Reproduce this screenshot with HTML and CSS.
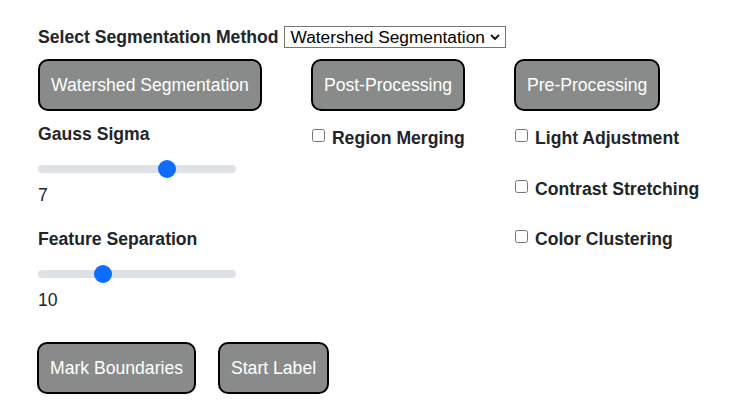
FILE: index.html
```html
<!DOCTYPE html>
<html>
<head>
<meta charset="utf-8">
<link rel="stylesheet" href="styles.css">
</head>
<body>
<div class="page">
  <div class="method-row">
    <label class="method-label" for="method">Select Segmentation Method</label>
    <span class="select-wrap">
      <select id="method" class="method-select">
        <option>Watershed Segmentation</option>
      </select>
      <svg class="chevron" width="10" height="7" viewBox="0 0 10 7"><path d="M1.5 1.5 L5 5 L8.5 1.5" fill="none" stroke="#111" stroke-width="1.8" stroke-linecap="round" stroke-linejoin="round"/></svg>
    </span>
  </div>

  <div class="columns">
    <div class="col col-main">
      <button class="btn">Watershed Segmentation</button>
      <div class="field-label first">Gauss Sigma</div>
      <input class="slider" type="range" min="1" max="10" value="7">
      <div class="value">7</div>
      <div class="field-label">Feature Separation</div>
      <input class="slider" type="range" min="0" max="32" value="10">
      <div class="value">10</div>
    </div>
    <div class="col">
      <button class="btn">Post-Processing</button>
      <div class="checks">
        <label class="check"><input type="checkbox"><span>Region Merging</span></label>
      </div>
    </div>
    <div class="col">
      <button class="btn">Pre-Processing</button>
      <div class="checks">
        <label class="check"><input type="checkbox"><span>Light Adjustment</span></label>
        <label class="check"><input type="checkbox"><span>Contrast Stretching</span></label>
        <label class="check"><input type="checkbox"><span>Color Clustering</span></label>
      </div>
    </div>
  </div>

  <div class="actions">
    <button class="btn">Mark Boundaries</button>
    <button class="btn">Start Label</button>
  </div>
</div>
<div class="bottom-fade"></div>
</body>
</html>
```

FILE: styles.css
```css
html, body {
  margin: 0;
  padding: 0;
  background: #ffffff;
}

body {
  font-family: "Liberation Sans", Arial, sans-serif;
  font-size: 17.6px;
  line-height: 20px;
  color: #212529;
  overflow: hidden;
  height: 401px;
}

.page {
  padding: 26px 0 0 38px;
}

.method-row {
  display: flex;
  align-items: center;
  height: 22px;
}

.method-label {
  font-weight: bold;
  margin-right: 6px;
}

.select-wrap {
  position: relative;
  display: inline-block;
  height: 22px;
}

.method-select {
  -webkit-appearance: none;
  appearance: none;
  box-sizing: border-box;
  width: 222px;
  height: 22px;
  margin: 0;
  padding: 0 18px 0 5px;
  border: 1px solid #767676;
  border-radius: 0;
  background: #ffffff;
  color: #000000;
  font-family: "Liberation Sans", Arial, sans-serif;
  font-size: 17.3px;
  line-height: 20px;
}

.chevron {
  position: absolute;
  right: 6px;
  top: 8px;
  pointer-events: none;
}

.columns {
  display: flex;
  align-items: flex-start;
  gap: 49px;
  margin-top: 11px;
}

.col {
  display: flex;
  flex-direction: column;
  align-items: flex-start;
}

.btn {
  box-sizing: border-box;
  height: 52px;
  margin: 0;
  padding: 0 11px;
  background: #888b89;
  color: #ffffff;
  border: 2px solid #000000;
  border-radius: 10px;
  font-family: "Liberation Sans", Arial, sans-serif;
  font-size: 17.6px;
  line-height: 20px;
  white-space: nowrap;
}

.field-label {
  font-weight: bold;
  margin-top: 24px;
}

.field-label.first {
  margin-top: 13px;
}

.slider {
  -webkit-appearance: none;
  appearance: none;
  display: block;
  width: 198px;
  height: 18px;
  margin: 16px 0 0 0;
  padding: 0;
  background: transparent;
}

.slider::-webkit-slider-runnable-track {
  height: 8px;
  background: #dee2e6;
  border-radius: 4px;
}

.slider::-webkit-slider-thumb {
  -webkit-appearance: none;
  appearance: none;
  width: 18px;
  height: 18px;
  margin-top: -5px;
  border-radius: 50%;
  background: #0d6efd;
  border: none;
}

.value {
  margin-top: 7px;
}

.checks {
  display: flex;
  flex-direction: column;
  gap: 30.5px;
  margin-top: 17px;
}

.check {
  display: flex;
  align-items: flex-start;
  font-weight: bold;
  white-space: nowrap;
}

.check input {
  width: 13px;
  height: 13px;
  margin: 1px 7px 0 1px;
  flex: none;
}

.actions {
  display: flex;
  gap: 22px;
  margin-top: 32px;
  margin-left: -1px;
}

.bottom-fade {
  position: fixed;
  left: 0;
  right: 0;
  bottom: 0;
  height: 18px;
  background: linear-gradient(to bottom, rgba(0, 0, 0, 0), rgba(0, 0, 0, 0.045));
  -webkit-mask-image: linear-gradient(to right, rgba(0, 0, 0, 0.2), #000 80px);
  mask-image: linear-gradient(to right, rgba(0, 0, 0, 0.2), #000 80px);
  z-index: -1;
  pointer-events: none;
}
```
